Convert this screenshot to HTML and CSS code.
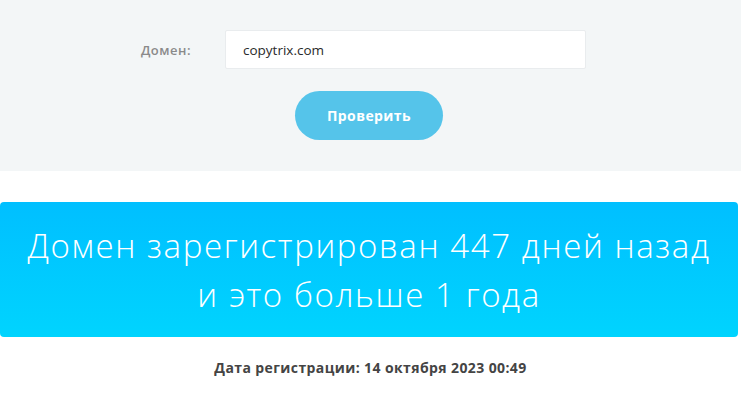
FILE: index.html
```html
<!DOCTYPE html>
<html lang="ru">
<head>
<meta charset="utf-8">
<link rel="stylesheet" href="styles.css">
</head>
<body>
<section class="check">
  <div class="row">
    <label class="label">Домен:</label>
    <div class="input">copytrix.com</div>
  </div>
  <div class="actions">
    <button class="btn">Проверить</button>
  </div>
</section>
<div class="result">
  <div class="banner">Домен зарегистрирован 447 дней назад<br>и это больше 1 года</div>
  <p class="date">Дата регистрации: 14 октября 2023 00:49</p>
</div>
</body>
</html>
```
FILE: styles.css
```css
* { box-sizing: border-box; }
html, body { margin: 0; padding: 0; background: #fff; }
body { font-family: "Open Sans", "Noto Sans", sans-serif; width: 741px; }
.check {
  background: #f3f6f7;
  height: 171px;
  padding-top: 30px;
}
.row {
  display: flex;
  align-items: center;
  height: 39px;
}
.label {
  width: 191px;
  text-align: right;
  font-size: 13px;
  letter-spacing: 0.5px;
  font-weight: 600;
  color: #8a8a8a;
  margin-right: 34px;
}
.input {
  width: 361px;
  height: 39px;
  background: #fff;
  border: 1px solid #e9ecee;
  border-radius: 2px;
  padding-left: 17px;
  display: flex;
  align-items: center;
  font-size: 13.5px;
  color: #2a2a2a;
}
.actions {
  display: flex;
  justify-content: center;
  margin-top: 22px;
}
.btn {
  width: 148px;
  height: 49px;
  border: none;
  border-radius: 25px;
  background: #55c4ea;
  color: #fff;
  font-family: inherit;
  font-size: 14px;
  letter-spacing: 0.4px;
  font-weight: 700;
  margin-left: -3px;
}
.result { padding-top: 31px; }
.banner {
  width: 738px;
  height: 135px;
  border-radius: 4px;
  background: linear-gradient(#00bfff, #00d4fe);
  color: #fff;
  font-size: 33px;
  letter-spacing: 1.6px;
  font-weight: 300;
  line-height: 49px;
  text-align: center;
  padding-top: 19px;
}
.date {
  margin: 21px 0 0;
  text-align: center;
  font-size: 14px;
  letter-spacing: 0.4px;
  font-weight: 700;
  color: #444;
}
```
